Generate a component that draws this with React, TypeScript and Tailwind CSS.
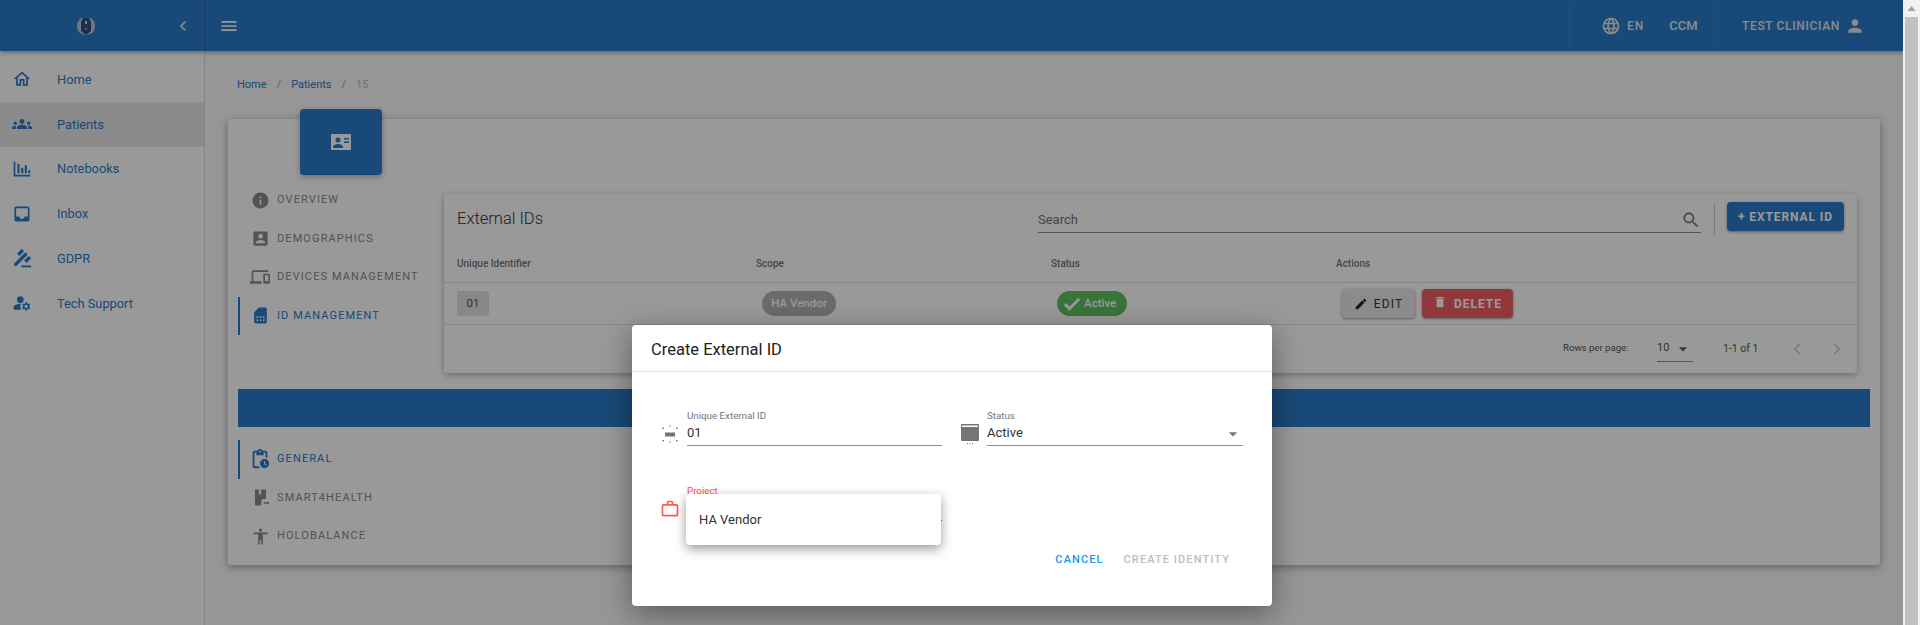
import type { ReactNode } from "react"
import { ChevronLeft, ChevronRight } from "lucide-react"

const P = {
	home: "M12 5.69l5 4.5V18h-2v-6H9v6H7v-7.81l5-4.5M12 3L2 12h3v8h6v-6h2v6h6v-8h3L12 3z",
	people:
		"M12 12.75c1.63 0 3.07.39 4.24.9 1.08.48 1.76 1.56 1.76 2.73V18H6v-1.61c0-1.18.68-2.26 1.76-2.73 1.17-.52 2.61-.91 4.24-.91zM4 13c1.1 0 2-.9 2-2s-.9-2-2-2-2 .9-2 2 .9 2 2 2zm1.13 1.1c-.37-.06-.74-.1-1.13-.1-.99 0-1.93.21-2.78.58C.48 14.9 0 15.62 0 16.43V18h4.5v-1.61c0-.83.23-1.61.63-2.29zM20 13c1.1 0 2-.9 2-2s-.9-2-2-2-2 .9-2 2 .9 2 2 2zm4 3.43c0-.81-.48-1.53-1.22-1.85-.85-.37-1.79-.58-2.78-.58-.39 0-.76.04-1.13.1.4.68.63 1.46.63 2.29V18H24v-1.57zM12 6c1.66 0 3 1.34 3 3s-1.34 3-3 3-3-1.34-3-3 1.34-3 3-3z",
	chart: "M2 3h2v16h18v2H2zM6.5 6h2.6v11H6.5zM11 10.500h2.600V17H11zM15.300 7.500h2.600V17h-2.600zM19.500 13.500H22V17h-2.500z",
	inbox:
		"M19 3H4.99c-1.11 0-1.98.89-1.98 2L3 19c0 1.1.88 2 1.99 2H19c1.1 0 2-.9 2-2V5c0-1.11-.9-2-2-2zm0 12h-4c0 1.66-1.35 3-3 3s-2.99-1.34-2.99-3H4.99V5H19v10z",
	gavel: "M1 21h12v2H1zM5.245 8.07l2.83-2.827 14.14 14.142-2.828 2.828zM12.317 1l5.657 5.656-2.83 2.83-5.654-5.66zM3.825 9.485l5.657 5.657-2.828 2.828-5.657-5.657z",
	tech:
		"M10.67 13.020c-.22-.01-.44-.02-.67-.02-2.42 0-4.68.67-6.61 1.82-.88.52-1.39 1.5-1.39 2.53V20h9.26c-.79-1.13-1.26-2.51-1.26-4 0-1.07.25-2.07.67-2.98zM10 4a4 4 0 1 1 0 8 4 4 0 0 1 0-8zM20.750 16c0-.22-.03-.42-.06-.63l1.14-1.010-1-1.730-1.450.49c-.32-.27-.68-.48-1.080-.63L18 11h-2l-.3 1.490c-.4.15-.76.36-1.080.63l-1.450-.49-1 1.730 1.140 1.010c-.03.21-.06.41-.06.63s.03.42.06.63l-1.140 1.010 1 1.730 1.450-.49c.32.27.68.48 1.080.63L16 21h2l.3-1.490c.4-.15.76-.36 1.080-.63l1.450.49 1-1.730-1.140-1.010c.03-.21.06-.41.06-.63zM17 18c-1.100 0-2-.9-2-2s.9-2 2-2 2 .9 2 2-.9 2-2 2z",
	menu: "M3 18h18v-2H3v2zm0-5h18v-2H3v2zm0-7v2h18V6H3z",
	back: "M15.41 7.41L14 6l-6 6 6 6 1.41-1.41L10.83 12z",
	globe:
		"M11.99 2C6.47 2 2 6.48 2 12s4.47 10 9.99 10C17.52 22 22 17.52 22 12S17.52 2 11.99 2zm6.93 6h-2.95c-.32-1.25-.78-2.45-1.38-3.56 1.84.63 3.37 1.91 4.33 3.56zM12 4.04c.83 1.2 1.48 2.53 1.91 3.96h-3.82c.43-1.43 1.08-2.76 1.91-3.96zM4.26 14C4.1 13.36 4 12.69 4 12s.1-1.36.26-2h3.38c-.08.66-.14 1.32-.14 2 0 .68.06 1.34.14 2H4.26zm.82 2h2.95c.32 1.25.78 2.45 1.38 3.56-1.84-.63-3.37-1.9-4.33-3.56zm2.95-8H5.08c.96-1.66 2.49-2.93 4.33-3.56C8.81 5.55 8.35 6.75 8.03 8zM12 19.96c-.83-1.2-1.48-2.53-1.91-3.96h3.82c-.43 1.43-1.08 2.76-1.91 3.96zM14.34 14H9.66c-.09-.66-.16-1.32-.16-2 0-.68.07-1.35.16-2h4.68c.09.65.16 1.32.16 2 0 .68-.07 1.34-.16 2zm.25 5.56c.6-1.11 1.06-2.31 1.38-3.56h2.95c-.96 1.65-2.49 2.93-4.33 3.56zM16.36 14c.08-.66.14-1.32.14-2 0-.68-.06-1.34-.14-2h3.38c.16.64.26 1.31.26 2s-.1 1.36-.26 2h-3.38z",
	person: "M12 12c2.21 0 4-1.79 4-4s-1.79-4-4-4-4 1.79-4 4 1.79 4 4 4zm0 2c-2.67 0-8 1.34-8 4v2h16v-2c0-2.66-5.33-4-8-4z",
	info: "M12 2C6.48 2 2 6.48 2 12s4.48 10 10 10 10-4.48 10-10S17.52 2 12 2zm1 15h-2v-6h2v6zm0-8h-2V7h2v2z",
	account:
		"M3 5v14c0 1.1.89 2 2 2h14c1.1 0 2-.9 2-2V5c0-1.1-.9-2-2-2H5c-1.11 0-2 .9-2 2zm12 4c0 1.66-1.34 3-3 3s-3-1.34-3-3 1.34-3 3-3 3 1.34 3 3zm-9 8c0-2 4-3.1 6-3.1s6 1.1 6 3.1v1H6v-1z",
	devices:
		"M4 6h18V4H4c-1.1 0-2 .9-2 2v11H0v3h14v-3H4V6zm19 2h-6c-.55 0-1 .45-1 1v10c0 .55.45 1 1 1h6c.55 0 1-.45 1-1V9c0-.55-.45-1-1-1zm-1 9h-4v-7h4v7z",
	sim: "M19.99 4c0-1.1-.89-2-1.99-2h-8L4 8v12c0 1.1.9 2 2 2h12c1.1 0 2-.9 2-2l-.01-16zM9 19H7v-2h2v2zm8 0h-2v-2h2v2zm-8-4H7v-2h2v2zm4 4h-2v-2h2v2zm0-4h-2v-2h2v2zm4 0h-2v-2h2v2z",
	pending:
		"M17 12c-2.76 0-5 2.24-5 5s2.24 5 5 5 5-2.24 5-5-2.24-5-5-5zm1.65 7.35L16.5 17.2V14h1v2.79l1.85 1.85-.7.71zM18 3h-3.18C14.4 1.84 13.3 1 12 1s-2.4.84-2.82 2H6c-1.1 0-2 .9-2 2v15c0 1.1.9 2 2 2h6.11c-.59-.57-1.07-1.25-1.42-2H6V5h2v3h8V5h2v5.08c.71.1 1.38.31 2 .6V5c0-1.1-.9-2-2-2zm-6 2c-.55 0-1-.45-1-1s.45-1 1-1 1 .45 1 1-.45 1-1 1z",
	smart: "M5 2h5v7l3-2V2h5c.6 0 1 .4 1 1v11h-4l-2 2v6H6c-.6 0-1-.4-1-1zM16 18h5v-1.300l2.500 2.300-2.500 2.300V20h-5z",
	holo: "M12 2c1.100 0 2 .9 2 2s-.9 2-2 2-2-.9-2-2 .9-2 2-2zm9 7h-6v13h-2v-6h-2v6H9V9H3V7h18v2z",
	search:
		"M15.500 14h-.79l-.28-.27C15.410 12.590 16 11.110 16 9.500 16 5.910 13.090 3 9.500 3S3 5.910 3 9.500 5.910 16 9.500 16c1.610 0 3.090-.59 4.230-1.570l.27.28v.79l5 4.990L20.490 19l-4.990-5zm-6 0C7.010 14 5 11.990 5 9.500S7.010 5 9.500 5 14 7.010 14 9.500 11.990 14 9.500 14z",
	check: "M9 16.170L4.830 12l-1.420 1.410L9 19 21 7l-1.410-1.410z",
	edit: "M3 17.250V21h3.750L17.810 9.940l-3.750-3.750L3 17.250zM20.710 7.040c.39-.39.39-1.020 0-1.410l-2.340-2.340c-.39-.39-1.020-.39-1.410 0l-1.830 1.830 3.750 3.750 1.830-1.830z",
	trash: "M6 19c0 1.100.9 2 2 2h8c1.100 0 2-.9 2-2V7H6v12zM19 4h-3.500l-1-1h-5l-1 1H5v2h14V4z",
	drop: "M7 10l5 5 5-5z",
	work: "M14 6V4h-4v2h4zM4 8v11h16V8H4zm16-2c1.110 0 2 .89 2 2v11c0 1.110-.89 2-2 2H4c-1.110 0-2-.89-2-2l.01-11c0-1.110.88-2 1.990-2h4V4c0-1.110.89-2 2-2h4c1.110 0 2 .89 2 2v2h4z",
	uid: "M7 10.500h10v4H7zM11.500 3.500h1v1.500h-1zM11.500 19.500h1V21h-1zM4.500 5.500h1.500V7H4.500zM18 5.500h1.500V7H18zM4.500 18h1.500v1.500H4.500zM18 18h1.500v1.500H18z",
	statusIcon: "M4 2h16c.6 0 1 .4 1 1v15c0 .6-.4 1-1 1H4c-.6 0-1-.4-1-1V3c0-.6.4-1 1-1zm0 1.500V5h16V3.500zM9 21h1v1H9zM11.500 21h1v1h-1zM14 21h1v1h-1z",
}

function Icon({ d, className }: { d: string; className?: string }) {
	return (
		<svg viewBox="0 0 24 24" fill="currentColor" fillRule="evenodd" className={className}>
			<path d={d} />
		</svg>
	)
}

const SIDEBAR = [
	{ label: "Home", icon: P.home },
	{ label: "Patients", icon: P.people, active: true },
	{ label: "Notebooks", icon: P.chart },
	{ label: "Inbox", icon: P.inbox },
	{ label: "GDPR", icon: P.gavel, flip: true },
	{ label: "Tech Support", icon: P.tech },
]

function TabItem({ icon, label, active, size = "h-[19px] w-[19px]" }: { icon: string; label: string; active?: boolean; size?: string }) {
	return (
		<div
			className={`flex h-[38.500px] items-center border-l-2 pl-[7px] ${active ? "border-[#2b7bc8] text-[#2b7bc8]" : "border-transparent text-[#8a8a8a]"}`}
		>
			<div className="flex w-[26px] justify-center">
				<Icon d={icon} className={size} />
			</div>
			<span className="ml-[4px] text-[11px] font-normal uppercase tracking-[1.100px]">{label}</span>
		</div>
	)
}

function Field({ icon, label, value, width, children }: { icon: string; label: string; value: string; width: string; children?: ReactNode }) {
	return (
		<div className="flex items-center">
			<Icon d={icon} className="mt-[13px] h-6 w-6 text-[#757575]" />
			<div className={`relative ml-[5px] border-b border-[#8e8e8e] pt-[1px] ${width}`}>
				<div className="text-[9.750px] leading-[14px] text-[#757575]">{label}</div>
				<div className="h-[22px] text-[13px] leading-[19px] text-[#333]">{value}</div>
				{children}
			</div>
		</div>
	)
}

export default function App() {
	return (
		<div className="flex h-[625px] overflow-hidden bg-[#f1f1f1] font-['Roboto',sans-serif]">
			<div className="relative flex w-[1903px] shrink-0 flex-col overflow-hidden bg-[#fafafa]">
				{/* Top bar */}
				<header className="z-10 flex h-[51px] shrink-0 items-center bg-[#2b7bc8] text-white shadow-[0_2px_4px_rgba(0,0,0,0.3)]">
					<div className="flex h-full w-[205px] shrink-0 items-center border-r border-[#00000033]">
						<svg viewBox="0 0 18 18" className="ml-[77px] h-[18px] w-[18px]">
							<path d="M5 1h8c3 1 5 4 5 8s-2 7-5 8l-4 1-4-1c-3-1-5-4-5-8s2-7 5-8z" fill="#b9c6d6" />
							<path d="M6 1h6l2 4v9l-5 4-5-4V5z" fill="#24518a" />
							<path d="M8 4h2v3H8z" fill="#cfd6de" />
							<circle cx="9" cy="12" r="1.300" fill="#ff5a5a" />
						</svg>
						<Icon d={P.back} className="ml-[78px] h-[20px] w-[20px] text-white/80" />
					</div>
					<Icon d={P.menu} className="ml-[14px] h-[20px] w-[20px]" />
					<div className="ml-auto flex h-[48px] items-center self-center text-[12px] font-medium text-[#e8e8e8]">
						<div className="flex h-full w-[146px] items-center border-x border-[#ffffff14] pl-[31px]">
							<Icon d={P.globe} className="h-[20px] w-[20px]" />
							<span className="ml-[6px] tracking-[1px]">EN</span>
							<span className="ml-[25px] text-[13px]">CCM</span>
						</div>
						<div className="flex h-full w-[188px] items-center pl-[27px]">
							<span className="tracking-[0.650px]">TEST CLINICIAN</span>
							<Icon d={P.person} className="ml-[5px] h-[20px] w-[20px]" />
						</div>
					</div>
				</header>

				<div className="flex min-h-0 flex-1">
					{/* Sidebar */}
					<aside className="w-[205px] shrink-0 border-r border-[#e0e0e0] bg-white pt-[6px]">
						{SIDEBAR.map((item) => (
							<div key={item.label} className={`flex h-[44.750px] items-center text-[#2b7bc8] ${item.active ? "bg-[#e8e8e8]" : ""}`}>
								<Icon d={item.icon} className={`ml-[12px] h-[20px] w-[20px] ${item.flip ? "-scale-x-100" : ""}`} />
								<span className="ml-[25px] text-[12.800px]">{item.label}</span>
							</div>
						))}
					</aside>

					{/* Main */}
					<main className="min-w-0 flex-1 px-[23px]">
						<div className="flex h-[32px] items-center pl-[9px] pt-[34px] text-[11px] text-[#2b7bc8]">
							<span>Home</span>
							<span className="mx-[10px] text-[#9e9e9e]">/</span>
							<span>Patients</span>
							<span className="mx-[10px] text-[#9e9e9e]">/</span>
							<span className="text-[#bdbdbd]">15</span>
						</div>

						<section className="mt-[34px] flow-root h-[446px] rounded-[3px] bg-white px-[10px] shadow-[0_2px_8px_rgba(0,0,0,0.35)]">
							<div className="-mt-[10px] ml-[62px] flex h-[66px] w-[82px] items-center justify-center rounded-[4px] bg-[#2b7bc8] text-white shadow-[0_2px_6px_rgba(0,0,0,0.3)]">
								<svg viewBox="0 0 24 24" className="h-[24px] w-[24px]">
									<path d="M3 4h18c.6 0 1 .4 1 1v14c0 .6-.4 1-1 1H3c-.6 0-1-.4-1-1V5c0-.6.4-1 1-1z" fill="#fff" />
									<circle cx="9" cy="10" r="2.500" fill="#2b7bc8" />
									<path d="M4 18v-1c0-2 3-3 5-3s5 1 5 3v1zM15 8h5v1.500h-5zM15 11.500h5V13h-5z" fill="#2b7bc8" />
								</svg>
							</div>

							<div className="flex">
								<nav className="w-[206px] shrink-0 pt-[6px]">
									<TabItem icon={P.info} label="Overview" />
									<TabItem icon={P.account} label="Demographics" />
									<TabItem icon={P.devices} label="Devices Management" size="h-[20px] w-[20px]" />
									<TabItem icon={P.sim} label="ID Management" active />
								</nav>

								{/* External IDs card */}
								<div className="mt-[19px] h-[179px] w-[1413px] shrink-0 rounded-[3px] bg-white shadow-[0_2px_6px_rgba(0,0,0,0.3)]">
									<div className="flex h-[51px] items-start px-[13px] pt-[8px]">
										<h2 className="mt-[6px] w-[581px] text-[16.500px] font-light leading-[22px] text-[#333]">External IDs</h2>
										<div className="flex h-[31px] w-[663px] items-center justify-between border-b border-[#8a8a8a] pt-[5px] text-[13px] text-[#757575]">
											<span>Search</span>
											<Icon d={P.search} className="h-[20px] w-[20px] text-[#757575]" />
										</div>
										<div className="ml-[13px] mt-[2px] h-[31px] w-px bg-[#ccc]" />
										<button className="ml-[12px] flex h-[29px] w-[117px] items-center justify-center rounded-[4px] bg-[#2b7bc8] text-[12px] font-bold tracking-[0.900px] text-white shadow-[0_1px_3px_rgba(0,0,0,0.4)]">
											+ EXTERNAL ID
										</button>
									</div>
									<div className="grid h-[38px] grid-cols-[299px_295px_285px_1fr] items-center border-b border-[#e0e0e0] pl-[13px] text-[10px] font-medium text-[#757575]">
										<span>Unique Identifier</span>
										<span>Scope</span>
										<span>Status</span>
										<span>Actions</span>
									</div>
									<div className="grid h-[42px] grid-cols-[299px_295px_285px_1fr] items-center border-b border-[#e0e0e0] pl-[13px] text-[11.500px]">
										<span className="flex h-[25px] w-[32px] items-center justify-center rounded-[3px] bg-[#e3e3e3] text-[#555]">01</span>
										<span className="ml-[6px] flex h-[25px] w-[74px] items-center justify-center rounded-full bg-[#b2b2b2] font-medium text-white">HA Vendor</span>
										<span className="ml-[6px] flex h-[25px] w-[70px] items-center rounded-full bg-[#5fc163] pl-[5px] font-medium text-white">
											<Icon d={P.check} className="h-[20px] w-[20px] stroke-current stroke-[1.500]" />
											<span className="ml-[2px]">Active</span>
										</span>
										<span className="ml-[6px] flex items-center">
											<button className="flex h-[29px] w-[73px] items-center justify-center rounded-[4px] bg-[#e8e8e8] text-[12px] tracking-[1.200px] text-[#333] shadow-[0_1px_3px_rgba(0,0,0,0.4)]">
												<Icon d={P.edit} className="mr-[6px] h-[14px] w-[14px] text-[#222]" />
												EDIT
											</button>
											<button className="ml-[7px] flex h-[29px] w-[91px] items-center justify-center rounded-[4px] bg-[#f06065] text-[12px] font-bold tracking-[1px] text-white shadow-[0_1px_3px_rgba(0,0,0,0.4)]">
												<Icon d={P.trash} className="mr-[7px] -mt-[4px] h-[14px] w-[14px]" />
												DELETE
											</button>
										</span>
									</div>
									<div className="flex h-[47px] items-center pl-[1119px] text-[9.600px] text-[#555]">
										<span className="w-[94px]">Rows per page:</span>
										<span className="flex h-[26px] w-[36px] items-center justify-between border-b border-[#8a8a8a] pt-[1px] text-[11px]">
											10
											<Icon d={P.drop} className="h-[20px] w-[20px] text-[#616161]" />
										</span>
										<span className="ml-[30px] w-[65px] text-[10.500px]">1-1 of 1</span>
										<ChevronLeft className="h-[18px] w-[18px] text-[#bdbdbd]" strokeWidth={1.500} />
										<ChevronRight className="ml-[22px] h-[18px] w-[18px] text-[#bdbdbd]" strokeWidth={1.500} />
									</div>
								</div>
							</div>

							<div className="mt-[16px] h-[38px] bg-[#2b7bc8]" />
							<nav className="mt-[13px]">
								<TabItem icon={P.pending} label="General" active size="h-[22px] w-[22px]" />
								<TabItem icon={P.smart} label="Smart4Health" />
								<TabItem icon={P.holo} label="HoloBalance" />
							</nav>
						</section>
					</main>
				</div>

				{/* Backdrop */}
				<div className="absolute inset-0 z-20 bg-black/40" />

				{/* Dialog */}
				<div className="absolute left-[632px] top-[325px] z-30 h-[281px] w-[640px] rounded-[4px] bg-white shadow-[0_8px_30px_rgba(0,0,0,0.4)]">
					<div className="flex h-[47px] items-center border-b border-[#e0e0e0] pl-[19px] pt-[5px] text-[16.500px] text-[#222]">Create External ID</div>
					<div className="flex pl-[26px] pt-[36px]">
						<Field icon={P.uid} label="Unique External ID" value="01" width="w-[255px]" />
						<div className="ml-[16px]">
							<Field icon={P.statusIcon} label="Status" value="Active" width="w-[256px]">
								<Icon d={P.drop} className="absolute bottom-[1px] right-0 h-[20px] w-[20px] text-[#757575]" />
							</Field>
						</div>
					</div>
					<div className="flex pl-[28px] pt-[37px]">
						<div className="flex items-center">
							<Icon d={P.work} className="mt-[13px] h-[20px] w-[20px] text-[#ff5a5a]" />
							<div className="relative ml-[7px] h-[38px] w-[255px] border-b border-[#f44336] pt-[1px]">
								<div className="text-[9.750px] leading-[14px] text-[#ff5252]">Project</div>
								{/* Open select menu */}
								<div className="absolute -left-px top-[11px] z-10 flex h-[51px] w-[255px] items-center rounded-[4px] bg-white pl-[13px] text-[13px] text-[#333] shadow-[0_4px_12px_rgba(0,0,0,0.4)]">
									HA Vendor
								</div>
							</div>
						</div>
					</div>
					<div className="mt-[31px] flex justify-end pr-[42px] text-[11px] font-medium tracking-[1.100px]">
						<span className="text-[#2196f3]">CANCEL</span>
						<span className="ml-[20px] text-[#bdbdbd]">CREATE IDENTITY</span>
					</div>
				</div>
			</div>

			{/* Scrollbar */}
			<div className="flex w-[17px] shrink-0 flex-col items-center bg-[#f1f1f1]">
				<svg viewBox="0 0 17 17" className="h-[17px] w-[17px] shrink-0">
					<path d="M8.500 6l4 5h-8z" fill="#a3a3a3" />
				</svg>
				<div className="w-[13px] flex-1 bg-[#c1c1c1]" />
			</div>
		</div>
	)
}
